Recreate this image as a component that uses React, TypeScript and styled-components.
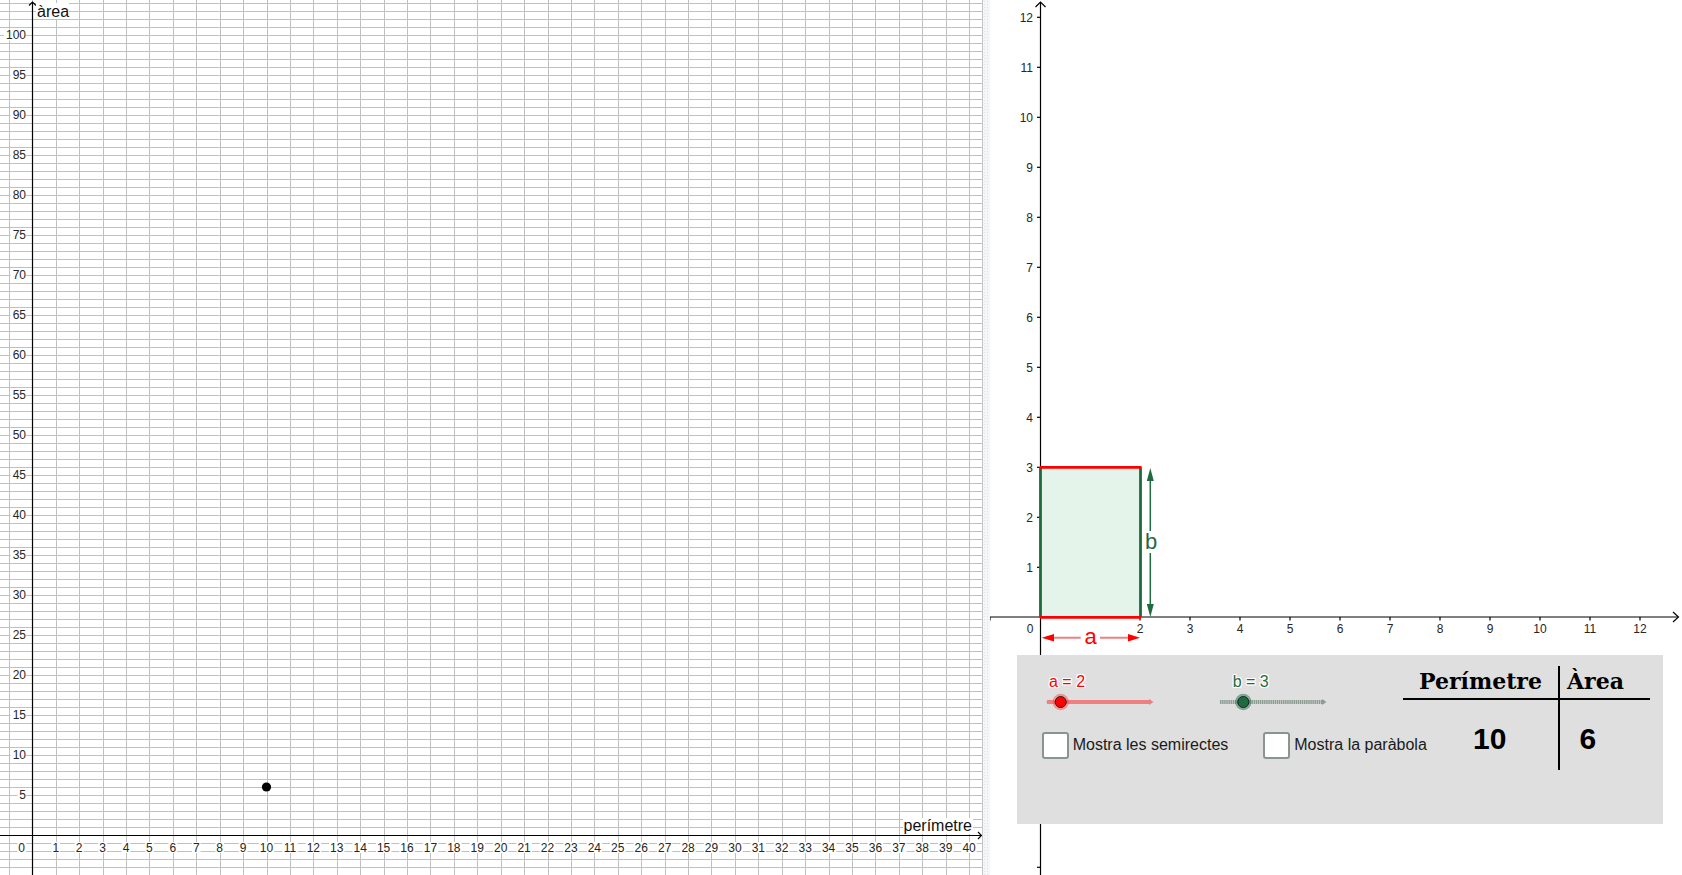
import React from "react";
import styled, { createGlobalStyle } from "styled-components";

const GlobalStyle = createGlobalStyle`
  html, body {
    margin: 0;
    padding: 0;
    background: #ffffff;
    overflow: hidden;
  }
  body {
    font-family: "Liberation Sans", Arial, sans-serif;
  }
`;

const GRID = "#c0c0c0";
const GREEN = "#1f6b40";
const RED = "#ff0000";
const INK = "#262626";

const range = (a: number, b: number) =>
  Array.from({ length: b - a + 1 }, (_, i) => a + i);

// left view: perimeter / area plane
const L = { w: 982, h: 875, ox: 32.3, oy: 835, ux: 23.42, uy: 8 };
// right view: the rectangle
const R = { w: 692, h: 875, ox: 50, oy: 617.3, u: 50 };

const crisp = (v: number) => Math.round(v) + 0.5;

type LabelProps = {
  x: number;
  y: number;
  text: string;
  anchor?: "start" | "middle" | "end";
  backed?: boolean;
};

const TickLabel: React.FC<LabelProps> = ({ x, y, text, anchor = "middle", backed }) => {
  const w = text.length * 6.7 + 2;
  const left = anchor === "middle" ? x - w / 2 : anchor === "end" ? x - w : x;
  return (
    <g>
      {backed && <rect x={left} y={y - 5.5} width={w} height={11} fill="#fff" />}
      <text x={x} y={y + 4.3} textAnchor={anchor}>
        {text}
      </text>
    </g>
  );
};

const PerimeterAreaPlane: React.FC = () => {
  const xs = range(-1, 40).map((k) => crisp(L.ox + k * L.ux));
  const ys = range(-5, 104).map((k) => crisp(L.oy - k * L.uy));
  const axX = crisp(L.ox);
  const axY = crisp(L.oy);
  return (
    <Plot width={L.w} height={L.h}>
      <g stroke={GRID} strokeWidth={1} shapeRendering="crispEdges">
        {xs.map((x) => (
          <line key={`v${x}`} x1={x} y1={0} x2={x} y2={L.h} />
        ))}
        {ys.map((y) => (
          <line key={`h${y}`} x1={0} y1={y} x2={L.w} y2={y} />
        ))}
      </g>

      <g stroke="#000" strokeWidth={1.2} fill="none">
        <line x1={axX} y1={2} x2={axX} y2={L.h} />
        <line x1={0} y1={axY} x2={981.5} y2={axY} />
        <path d={`M ${axX - 3.5} ${5.5} L ${axX} 2 L ${axX + 3.5} 5.5`} />
        <path d={`M 978 ${axY - 3.5} L 981.5 ${axY} L 978 ${axY + 3.5}`} />
      </g>

      <g>
        {range(1, 20).map((k) => (
          <TickLabel key={`y${k}`} x={26} y={L.oy - 5 * k * L.uy} text={String(5 * k)} anchor="end" backed />
        ))}
        {range(1, 40).map((k) => (
          <TickLabel key={`x${k}`} x={L.ox + k * L.ux} y={847.5} text={String(k)} backed />
        ))}
        <TickLabel x={21.7} y={847.5} text="0" backed />
      </g>

      <rect x={36} y={3} width={33} height={16} fill="#fff" />
      <AxisName x={37} y={16.5}>àrea</AxisName>
      <rect x={903} y={818} width={70} height={16} fill="#fff" />
      <AxisName x={972} y={830.5} textAnchor="end">
        perímetre
      </AxisName>

      <circle cx={L.ox + 10 * L.ux} cy={L.oy - 6 * L.uy} r={4.6} fill="#000" />
    </Plot>
  );
};

const RectanglePlane: React.FC = () => {
  const axX = R.ox + 0.5;
  const axY = crisp(R.oy) - 0.5;
  const px = (k: number) => R.ox + k * R.u;
  const py = (k: number) => R.oy - k * R.u;
  const a = 2;
  const b = 3;
  // the label of "a" hides the tick and number at x = 1
  const xTicks = range(-1, 12).filter((k) => k !== 0 && k !== 1);
  return (
    <Plot width={R.w} height={R.h}>
      <g stroke="#000" strokeWidth={1.2} fill="none">
        <line x1={axX} y1={2} x2={axX} y2={R.h} />
        <line x1={0} y1={axY} x2={688} y2={axY} />
        <path d={`M ${axX - 5} 7 L ${axX} 2 L ${axX + 5} 7`} />
        <path d={`M 683 ${axY - 5} L 688.5 ${axY} L 683 ${axY + 5}`} />
        {range(-5, 12)
          .filter((k) => k !== 0)
          .map((k) => (
            <line key={`ty${k}`} x1={axX - 3.5} y1={py(k)} x2={axX} y2={py(k)} />
          ))}
        {xTicks.map((k) => (
          <line key={`tx${k}`} x1={px(k)} y1={axY} x2={px(k)} y2={axY + 3.5} />
        ))}
      </g>

      <g>
        {range(1, 12).map((k) => (
          <TickLabel key={`ly${k}`} x={43} y={py(k)} text={String(k)} anchor="end" />
        ))}
        {xTicks
          .filter((k) => k > 0)
          .map((k) => (
            <TickLabel key={`lx${k}`} x={px(k)} y={629} text={String(k)} />
          ))}
        <TickLabel x={40} y={629} text="0" />
      </g>

      {/* the rectangle a x b */}
      <rect x={px(0)} y={py(b)} width={a * R.u} height={b * R.u} fill="#e5f4ea" />
      <g stroke={GREEN} strokeWidth={2.8}>
        <line x1={px(0) + 0.5} y1={py(b)} x2={px(0) + 0.5} y2={py(0)} />
        <line x1={px(a) + 0.5} y1={py(b)} x2={px(a) + 0.5} y2={py(0)} />
      </g>
      <g stroke={RED} strokeWidth={2.8}>
        <line x1={px(0)} y1={py(b)} x2={px(a) + 1.5} y2={py(b)} />
        <line x1={px(0)} y1={py(0)} x2={px(a) + 1} y2={py(0)} />
      </g>

      {/* measure b */}
      <g>
        <line x1={160.3} y1={478} x2={160.3} y2={606} stroke={GREEN} strokeWidth={1.5} />
        <path d="M 160.3 468 L 156.8 481 L 163.8 481 Z" fill={GREEN} />
        <path d="M 160.3 617 L 156.8 604 L 163.8 604 Z" fill={GREEN} />
        <rect x={153} y={531} width={16} height={22} fill="#fff" />
        <MeasureName x={161} y={549} fill={GREEN}>
          b
        </MeasureName>
      </g>

      {/* measure a */}
      <g>
        <line x1={60} y1={637.7} x2={142} y2={637.7} stroke="#f08080" strokeWidth={2} />
        <path d="M 51.7 637.7 L 64 633.9 L 64 641.5 Z" fill={RED} />
        <path d="M 150 637.7 L 138 633.9 L 138 641.5 Z" fill={RED} />
        <rect x={90.7} y={627} width={19.3} height={30} fill="#fff" />
        <MeasureName x={100.5} y={643.5} fill={RED}>
          a
        </MeasureName>
      </g>
    </Plot>
  );
};

type SliderProps = {
  label: string;
  color: string;
  track: string;
  halo: string;
  knob: number;
  shift: number;
  dotted?: boolean;
  leftCap?: boolean;
};

const Slider: React.FC<SliderProps> = ({ label, color, track, halo, knob, shift, dotted, leftCap }) => (
  <SliderBox>
    <SliderLabel $color={color} $shift={shift}>
      {label}
    </SliderLabel>
    <svg width={112} height={20}>
      <line
        x1={1}
        y1={10}
        x2={105}
        y2={10}
        stroke={track}
        strokeWidth={4}
        strokeDasharray={dotted ? "1.5 0.6" : undefined}
      />
      {leftCap && <path d="M 0 10 L 4 7.5 L 4 12.5 Z" fill={track} />}
      <path d="M 107.5 10 L 103 7 L 103 13 Z" fill={track} />
      <circle cx={knob} cy={10} r={8.2} fill={halo} />
      <circle cx={knob} cy={10} r={5.5} fill={color} stroke="#222" strokeWidth={1} />
    </svg>
  </SliderBox>
);

const CheckItem: React.FC<{ text: string }> = ({ text }) => (
  <CheckLabel>
    <CheckBox />
    <span>{text}</span>
  </CheckLabel>
);

export default function App() {
  return (
    <Page>
      <GlobalStyle />
      <LeftView>
        <PerimeterAreaPlane />
      </LeftView>
      <Splitter />
      <RightView>
        <RectanglePlane />
        <ControlPanel>
          <Controls>
            <SliderRow>
              <Slider
                label="a = 2"
                color={RED}
                track="#f08080"
                halo="rgba(255, 60, 60, 0.45)"
                knob={14.7}
                shift={3}
                leftCap
              />
              <Slider
                label="b = 3"
                color={GREEN}
                track="#8c9e94"
                halo="rgba(30, 110, 70, 0.5)"
                knob={24.3}
                shift={13.7}
                dotted
              />
            </SliderRow>
            <CheckRow>
              <CheckItem text="Mostra les semirectes" />
              <CheckItem text="Mostra la paràbola" />
            </CheckRow>
          </Controls>
          <ResultTable>
            <HeadCell $indent={16}>Perímetre</HeadCell>
            <HeadCell $indent={7.5} $divided>
              Àrea
            </HeadCell>
            <ValueCell $indent={70}>10</ValueCell>
            <ValueCell $indent={20} $divided>
              6
            </ValueCell>
          </ResultTable>
        </ControlPanel>
      </RightView>
    </Page>
  );
}

const Page = styled.div`
  display: flex;
  width: 1682px;
  height: 875px;
  overflow: hidden;
`;

const LeftView = styled.div`
  flex: none;
  width: 982px;
  height: 875px;
  background: #fff;
`;

const Splitter = styled.div`
  flex: none;
  width: 7px;
  height: 875px;
  border-left: 1px solid #c4c4c4;
  background-color: #f4f7f7;
  background-image: radial-gradient(#dde5e5 0.7px, transparent 0.9px);
  background-size: 3px 3px;
`;

const RightView = styled.div`
  position: relative;
  flex: 1;
  height: 875px;
  background: #fff;
`;

const Plot = styled.svg`
  display: block;
  font-family: "Liberation Sans", Arial, sans-serif;
  font-size: 12px;
  fill: ${INK};
`;

const AxisName = styled.text`
  font-size: 16px;
  fill: #111;
`;

const MeasureName = styled.text`
  font-size: 22px;
  text-anchor: middle;
`;

const ControlPanel = styled.div`
  position: absolute;
  left: 27px;
  top: 655px;
  width: 646px;
  height: 169px;
  background: #dfdfdf;
  display: flex;
  align-items: flex-start;
`;

const Controls = styled.div`
  flex: none;
  width: 386px;
  display: flex;
  flex-direction: column;
`;

const SliderRow = styled.div`
  display: flex;
  gap: 61px;
  padding: 17.7px 0 0 29px;
`;

const SliderBox = styled.div`
  display: flex;
  flex-direction: column;
  gap: 1.6px;
`;

const SliderLabel = styled.div<{ $color: string; $shift: number }>`
  height: 18px;
  margin-left: ${(p) => p.$shift}px;
  font-size: 16px;
  line-height: 18px;
  color: ${(p) => p.$color};
  text-shadow: 1px 0 0 #fff, -1px 0 0 #fff, 0 1px 0 #fff, 0 -1px 0 #fff, 1px 1px 0 #fff,
    -1px -1px 0 #fff, 1px -1px 0 #fff, -1px 1px 0 #fff;
`;

const CheckRow = styled.div`
  display: flex;
  align-items: center;
  gap: 35px;
  margin-top: 19.4px;
  padding-left: 24.7px;
  white-space: nowrap;
`;

const CheckLabel = styled.label`
  display: flex;
  align-items: center;
  gap: 4px;
  font-size: 16px;
  color: #1a1a1a;
`;

const CheckBox = styled.span`
  display: block;
  width: 23px;
  height: 23px;
  border: 2px solid #8a958f;
  border-radius: 3px;
  background: #fff;
`;

const ResultTable = styled.div`
  flex: none;
  display: grid;
  grid-template-columns: 154.5px 92.5px;
  grid-template-rows: 34px 70px;
  margin-top: 11px;
  color: #000;
`;

const HeadCell = styled.div<{ $indent: number; $divided?: boolean }>`
  padding: 4px 0 0 ${(p) => p.$indent}px;
  font-family: "DejaVu Serif", "Liberation Serif", serif;
  font-weight: bold;
  font-size: 22px;
  line-height: 22px;
  border-bottom: 2px solid #000;
  border-left: ${(p) => (p.$divided ? "2px solid #000" : "none")};
  white-space: nowrap;
`;

const ValueCell = styled.div<{ $indent: number; $divided?: boolean }>`
  display: flex;
  align-items: center;
  padding: 7px 0 0 ${(p) => p.$indent}px;
  font-family: "Liberation Sans", Arial, sans-serif;
  font-weight: bold;
  font-size: 30px;
  border-left: ${(p) => (p.$divided ? "2px solid #000" : "none")};
`;
